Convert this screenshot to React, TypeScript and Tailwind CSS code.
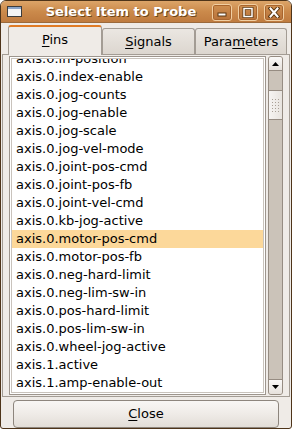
import React from 'react';

const pins = [
  'axis.0.in-position',
  'axis.0.index-enable',
  'axis.0.jog-counts',
  'axis.0.jog-enable',
  'axis.0.jog-scale',
  'axis.0.jog-vel-mode',
  'axis.0.joint-pos-cmd',
  'axis.0.joint-pos-fb',
  'axis.0.joint-vel-cmd',
  'axis.0.kb-jog-active',
  'axis.0.motor-pos-cmd',
  'axis.0.motor-pos-fb',
  'axis.0.neg-hard-limit',
  'axis.0.neg-lim-sw-in',
  'axis.0.pos-hard-limit',
  'axis.0.pos-lim-sw-in',
  'axis.0.wheel-jog-active',
  'axis.1.active',
  'axis.1.amp-enable-out',
];

const selected = 'axis.0.motor-pos-cmd';

function TitleButton({ children }: { children: React.ReactNode }) {
  return (
    <div className="w-[20px] h-[17px] rounded-[3px] border border-[#f1cfa2] bg-gradient-to-b from-[#cf8f50] to-[#b8733a] flex items-center justify-center shadow-[inset_0_0_0_1px_#a8652e]">
      {children}
    </div>
  );
}

function Grip() {
  const dots = [];
  for (let r = 0; r < 5; r++) {
    for (let c = 0; c < 3; c++) {
      dots.push(<rect key={`${r}-${c}`} x={2 + c * 3} y={2 + r * 3} width="1" height="1" fill="#a9a096" />);
    }
  }
  return (
    <svg width="11" height="17" viewBox="0 0 11 17">
      {dots}
    </svg>
  );
}

export default function App() {
  return (
    <div
      className="w-[292px] h-[429px] flex flex-col bg-[#efebe7] border border-[#4e3419] rounded-t-[6px] rounded-b-[3px] overflow-hidden text-[13px] text-black"
      style={{ fontFamily: '"DejaVu Sans", sans-serif' }}
    >
      {/* Title bar */}
      <div className="h-[21px] shrink-0 flex items-center bg-gradient-to-b from-[#dca468] via-[#cb8a4b] to-[#bf7b3f] pl-[6px] pr-[7px]">
        <svg width="15" height="11" viewBox="0 0 15 11" className="shrink-0">
          <rect x="0.5" y="0.5" width="14" height="10" fill="#f4f4f4" stroke="#3c3c3c" />
          <rect x="1" y="1" width="13" height="2" fill="#8aa4c8" />
        </svg>
        <div className="flex-1 text-center font-bold text-white text-[13px] whitespace-nowrap [text-shadow:1px_1px_0_#6e4519] pl-[8px]">
          Select Item to Probe
        </div>
        <div className="flex gap-[6px] mt-[1px] shrink-0">
          <TitleButton>
            <svg width="12" height="10" viewBox="0 0 12 10">
              <rect x="2" y="6" width="8" height="3" fill="#fff" stroke="#5a3712" strokeWidth="1" />
            </svg>
          </TitleButton>
          <TitleButton>
            <svg width="12" height="11" viewBox="0 0 12 11">
              <rect x="2" y="1.5" width="8" height="8" fill="none" stroke="#5a3712" strokeWidth="3" />
              <rect x="2" y="1.5" width="8" height="8" fill="none" stroke="#fff" strokeWidth="1.5" />
            </svg>
          </TitleButton>
          <TitleButton>
            <svg width="12" height="11" viewBox="0 0 12 11">
              <path d="M2.5 1.5 L9.5 9.5 M9.5 1.5 L2.5 9.5" stroke="#5a3712" strokeWidth="4" strokeLinecap="square" />
              <path d="M2.5 1.5 L9.5 9.5 M9.5 1.5 L2.5 9.5" stroke="#fff" strokeWidth="2" strokeLinecap="square" />
            </svg>
          </TitleButton>
        </div>
      </div>

      {/* Body */}
      <div className="flex-1 flex flex-col px-[1px] pb-[6px] border-t border-[#9b6a3c]">
        {/* Tabs */}
        <div className="h-[31px] shrink-0 flex items-end pl-[6px] relative z-10">
          <div className="w-[94px] h-[30px] -mb-[1px] rounded-t-[3px] border border-b-0 border-[#a39c94] border-t-2 border-t-[#e07b25] bg-[#efebe7] flex items-center justify-center pb-[2px]">
            <span><span className="underline underline-offset-2">P</span>ins</span>
          </div>
          <div className="w-[93px] h-[26px] rounded-t-[3px] border border-b-0 border-[#a39c94] bg-gradient-to-b from-[#ebe7e2] to-[#dcd6cf] flex items-center justify-center">
            <span><span className="underline underline-offset-2">S</span>ignals</span>
          </div>
          <div className="w-[92px] h-[26px] rounded-t-[3px] border border-b-0 border-[#a39c94] bg-gradient-to-b from-[#ebe7e2] to-[#dcd6cf] flex items-center justify-center">
            <span>Para<span className="underline underline-offset-2">m</span>eters</span>
          </div>
        </div>

        {/* Notebook page */}
        <div className="flex-1 flex border border-[#a39c94] pl-[6px] pr-[6px] pt-[1px] pb-[1px] gap-[2px] min-h-0">
          {/* List */}
          <div className="flex-1 border border-[#9d958d] p-[1px] bg-white min-h-0">
            <div className="h-full border border-[#c9c3bc] overflow-hidden">
              <div className="-mt-[9px] flex flex-col">
                {pins.map((p) => (
                  <div
                    key={p}
                    className={`h-[18px] leading-[18px] pl-[4px] whitespace-nowrap ${p === selected ? 'bg-[#fcd89a]' : ''}`}
                  >
                    {p}
                  </div>
                ))}
              </div>
            </div>
          </div>

          {/* Scrollbar */}
          <div className="w-[15px] flex flex-col bg-[#cbc3b9] border border-[#968c82] rounded-[3px] overflow-hidden">
            <div className="h-[14px] shrink-0 bg-gradient-to-b from-[#faf9f8] to-[#e6e1dc] border-b border-[#968c82] flex items-center justify-center">
              <svg width="7" height="4" viewBox="0 0 7 4">
                <path d="M0 4 L3.5 0 L7 4 Z" fill="#000" />
              </svg>
            </div>
            <div className="h-[19px] shrink-0" />
            <div className="h-[30px] shrink-0 bg-gradient-to-r from-[#f6f4f2] to-[#e8e4df] border-y border-[#968c82] flex items-center justify-center">
              <Grip />
            </div>
            <div className="flex-1" />
            <div className="h-[15px] shrink-0 bg-gradient-to-b from-[#faf9f8] to-[#e6e1dc] border-t border-[#968c82] flex items-center justify-center">
              <svg width="7" height="4" viewBox="0 0 7 4">
                <path d="M0 0 L7 0 L3.5 4 Z" fill="#000" />
              </svg>
            </div>
          </div>
        </div>

        {/* Close button */}
        <div className="mt-[3px] mx-[11px] h-[28px] shrink-0 rounded-[4px] border border-[#8d857d] bg-gradient-to-b from-[#f8f6f4] via-[#efebe7] to-[#e2ddd7] flex items-center justify-center">
          <span><span className="underline underline-offset-2">C</span>lose</span>
        </div>
      </div>
    </div>
  );
}
